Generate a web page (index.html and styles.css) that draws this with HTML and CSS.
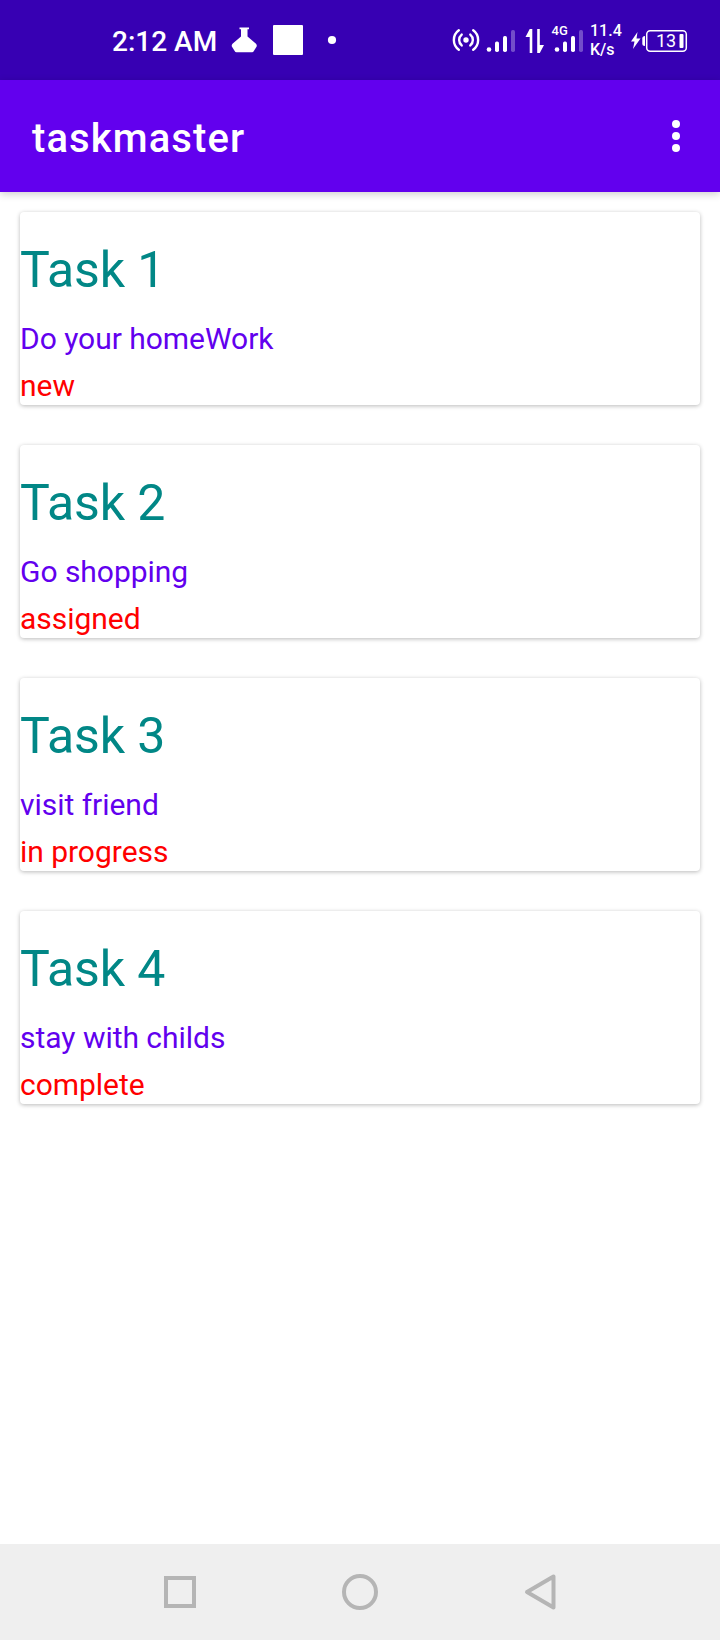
FILE: index.html
```html
<!DOCTYPE html>
<html lang="en">
<head>
<meta charset="utf-8">
<title>taskmaster</title>
<link rel="stylesheet" href="styles.css">
</head>
<body>
<div class="screen">
  <header class="status-bar">
    <div class="status-left">
      <span class="clock">2:12 AM</span>
      <svg class="notification-icons" width="108" height="80" viewBox="230 0 108 80">
        <path d="M239.500 27.500h9.500v1.800h-1.500v7.200l8.500 7.300q1.300 1.500.5 3l-2.500 4q-.8 1.500-2 1.500h-15.500q-1.200 0-2-1.500l-2.500-4q-.8-1.500.5-3l8.500-7.300v-7.200h-1.500z"/>
        <rect x="273" y="25" width="30" height="30" rx="1"/>
        <circle cx="332" cy="40" r="4.100"/>
      </svg>
    </div>
    <div class="status-right">
      <svg class="network-icons" width="138" height="80" viewBox="450 0 138 80">
        <circle cx="466" cy="40" r="2.700"/>
        <path class="wave" d="M461.700 34.600a7 7 0 0 0 0 10.800M470.300 34.600a7 7 0 0 1 0 10.800M458.800 30.300a12 12 0 0 0 0 19.400M473.200 30.300a12 12 0 0 1 0 19.400"/>
        <circle cx="489" cy="49.500" r="2.300"/>
        <rect x="495" y="41.500" width="4" height="10.500" rx="1.700"/>
        <rect x="503" y="36" width="4" height="16" rx="1.700"/>
        <rect class="dim" x="511" y="30" width="4" height="22" rx="1.700"/>
        <path d="M529.700 29h2.600v24h-2.600V37H525.500z"/>
        <path d="M537.200 29h2.600v16h4.200l-4.200 8h-2.600z"/>
        <text class="generation" x="551.500" y="35.300">4G</text>
        <circle cx="557" cy="49.500" r="2.300"/>
        <rect x="563" y="41.500" width="4" height="10.500" rx="1.700"/>
        <rect x="571" y="36" width="4" height="16" rx="1.700"/>
        <rect class="dim" x="579" y="30" width="4" height="22" rx="1.700"/>
      </svg>
      <div class="speed"><span>11.4</span><span>K/s</span></div>
      <svg class="battery" width="60" height="80" viewBox="630 0 60 80">
        <path d="M637.500 32l-6.500 9.500h3.500l-1.500 7.500 7.500-10.500h-4z"/>
        <path d="M645 36v10q-2.700 0-2.700-2.500v-5q0-2.500 2.700-2.500z"/>
        <rect class="shell" x="646.700" y="30.700" width="39.600" height="20.600" rx="3.500"/>
        <text class="charge" x="656" y="47.300">13</text>
        <rect x="679.500" y="34" width="4" height="14" rx="1"/>
      </svg>
    </div>
  </header>
  <div class="app-bar">
    <h1 class="app-title">taskmaster</h1>
    <svg class="menu" width="8" height="32" viewBox="0 0 8 32">
      <circle cx="4" cy="4" r="4"/><circle cx="4" cy="16" r="4"/><circle cx="4" cy="28" r="4"/>
    </svg>
  </div>
  <main class="tasks">
    <article class="card"><h2 class="title">Task 1</h2><p class="body">Do your homeWork</p><p class="state">new</p></article>
    <article class="card"><h2 class="title">Task 2</h2><p class="body">Go shopping</p><p class="state">assigned</p></article>
    <article class="card"><h2 class="title">Task 3</h2><p class="body">visit friend</p><p class="state">in progress</p></article>
    <article class="card"><h2 class="title">Task 4</h2><p class="body">stay with childs</p><p class="state">complete</p></article>
  </main>
  <nav class="nav-bar">
    <svg class="nav-icon" width="40" height="40" viewBox="0 0 40 40"><rect x="6" y="6" width="28" height="28"/></svg>
    <svg class="nav-icon" width="40" height="40" viewBox="0 0 40 40"><circle cx="20" cy="20" r="16"/></svg>
    <svg class="nav-icon" width="40" height="40" viewBox="0 0 40 40"><path d="M33.500 4.500v31L7 20z"/></svg>
  </nav>
</div>
</body>
</html>
```
FILE: styles.css
```css
body {
  margin: 0;
  font-family: Roboto, "Liberation Sans", sans-serif;
  background: #fff;
}
h1, h2, p { margin: 0; font-weight: 400; }
svg { display: block; fill: #fff; flex: none; }

.screen {
  display: flex;
  flex-direction: column;
  width: 720px;
  height: 1640px;
  overflow: hidden;
}

.status-bar {
  display: flex;
  justify-content: space-between;
  flex: none;
  height: 80px;
  padding: 0 30px 0 112px;
  box-sizing: border-box;
  background: #3700b3;
  color: #fff;
}
.status-left, .status-right { display: flex; }
.clock {
  width: 118px;
  font-size: 28px;
  font-weight: 500;
  line-height: 83px;
  white-space: nowrap;
}
.wave { fill: none; stroke: #fff; stroke-width: 2.4; stroke-linecap: round; }
.dim { opacity: .3; }
.generation { font-size: 13px; font-weight: 500; }
.speed {
  display: flex;
  flex-direction: column;
  width: 42px;
  padding: 21px 0 0 2px;
  box-sizing: border-box;
  font-size: 16px;
  font-weight: 500;
  line-height: 19px;
}
.shell { fill: none; stroke: #fff; stroke-width: 1.5; }
.charge { font-size: 18px; }

.app-bar {
  display: flex;
  align-items: center;
  justify-content: space-between;
  flex: none;
  height: 112px;
  padding: 0 40px 0 32px;
  box-sizing: border-box;
  background: #6200ee;
  box-shadow: 0 2px 8px rgba(0, 0, 0, .2);
}
.app-title {
  padding-top: 5px;
  color: #fff;
  font-size: 40px;
  font-weight: 500;
  letter-spacing: 1.1px;
}

.tasks {
  display: flex;
  flex-direction: column;
  flex: 1;
  gap: 40px;
  padding: 20px;
}
.card {
  height: 193px;
  flex: none;
  padding-top: 24px;
  box-sizing: border-box;
  border-radius: 4px;
  background: #fff;
  box-shadow: 0 1px 4px rgba(0, 0, 0, .28);
}
.title { color: #018786; font-size: 50px; line-height: 68px; letter-spacing: -.1px; }
.body, .state { font-size: 30px; line-height: 47px; letter-spacing: -.03px; }
.body { padding-top: 11px; color: #6200ee; }
.state { color: #f00; }

.nav-bar {
  display: flex;
  align-items: center;
  justify-content: center;
  gap: 140px;
  flex: none;
  height: 96px;
  background: #efefef;
}
.nav-icon { fill: none; stroke: #b5b5b5; stroke-width: 4; stroke-linejoin: round; }
.nav-icon rect { stroke-linejoin: miter; }
```
